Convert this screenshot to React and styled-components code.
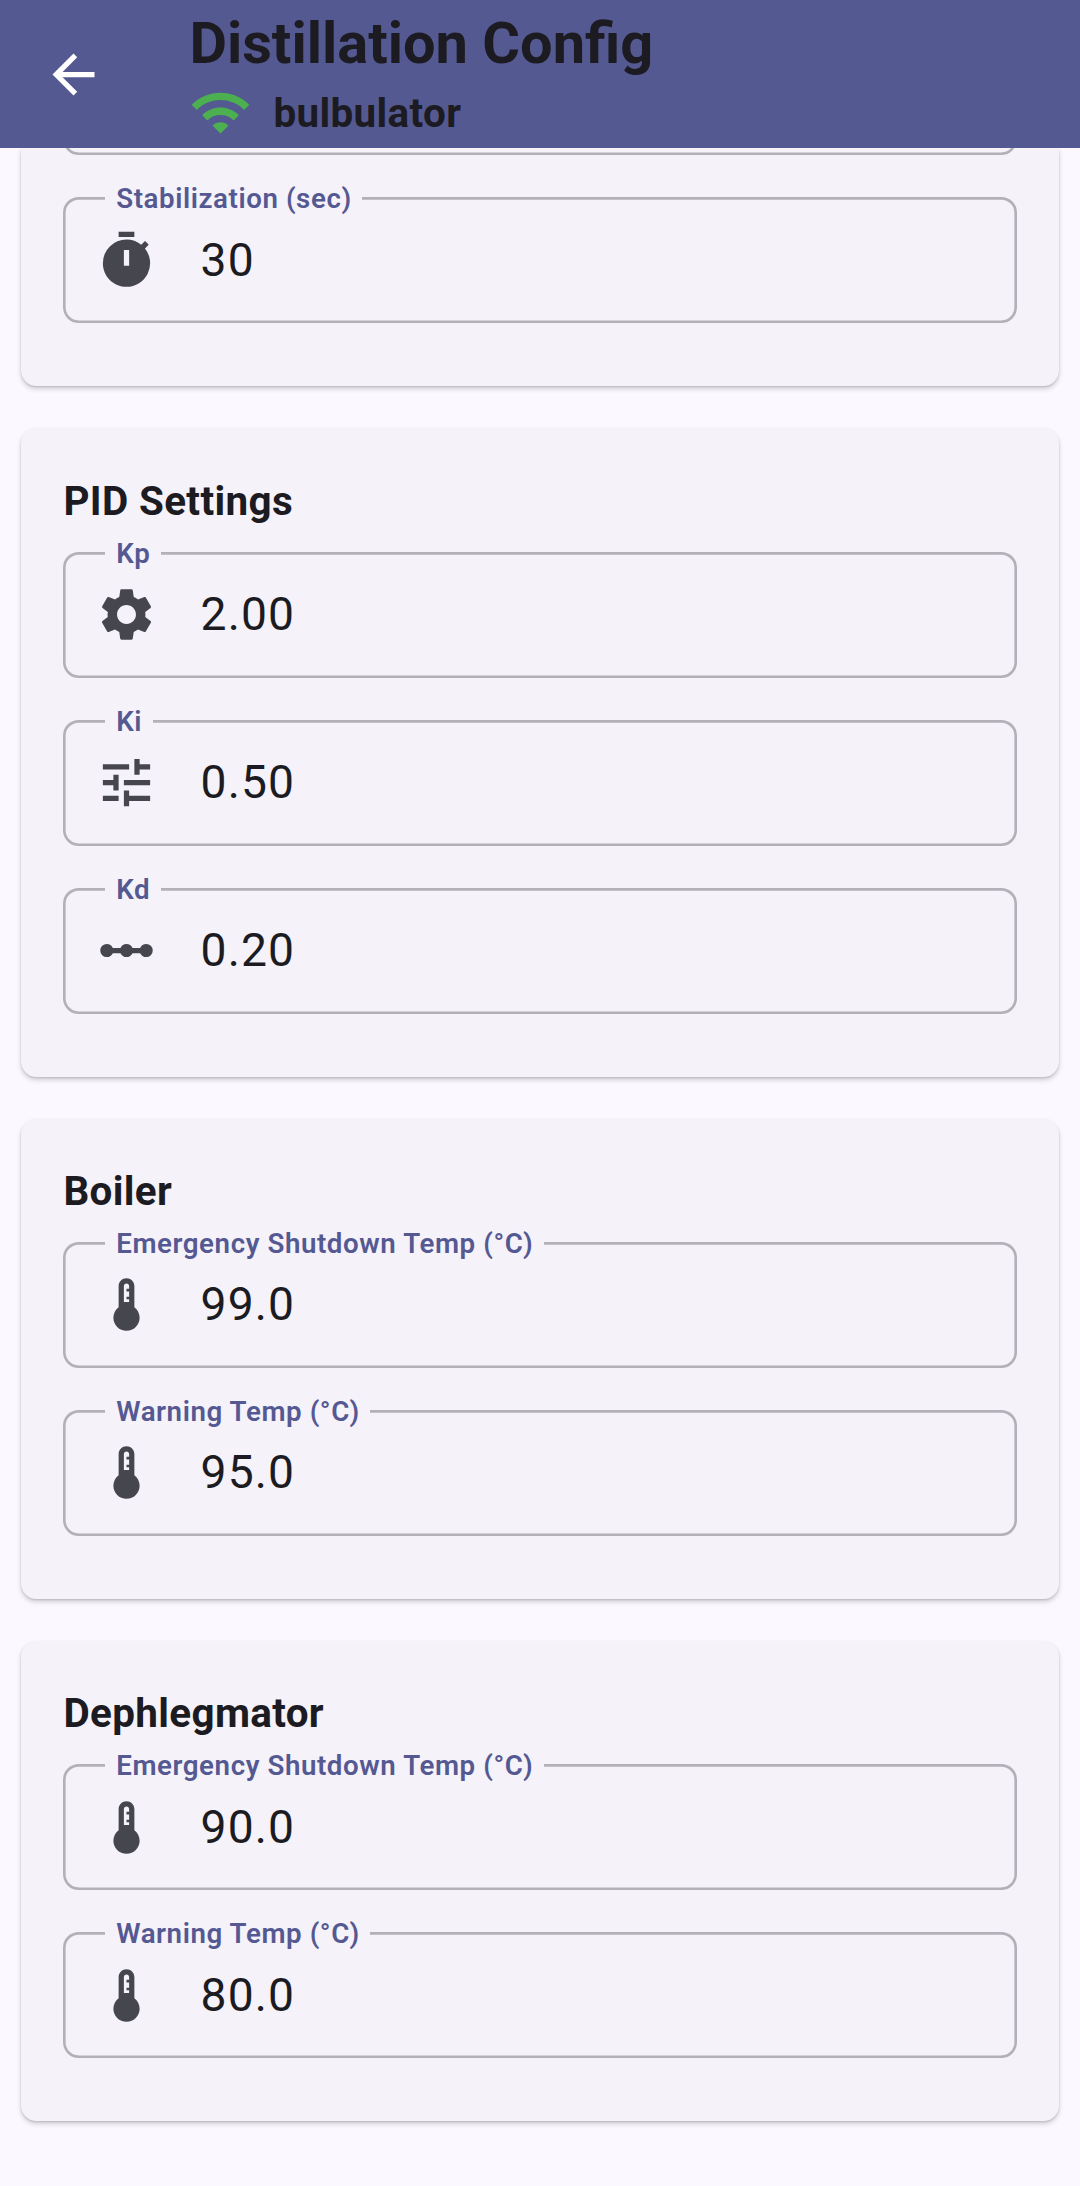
import React from "react";
import styled, { createGlobalStyle } from "styled-components";
import {
  MdArrowBack,
  MdWifi,
  MdTimer,
  MdSettings,
  MdTune,
  MdLinearScale,
  MdThermostat,
} from "react-icons/md";

const GlobalStyle = createGlobalStyle`
  *, *::before, *::after { box-sizing: border-box; }
  body {
    margin: 0;
    background: #fbf8ff;
    color: #1b1b21;
    font-family: Roboto, "Noto Sans", sans-serif;
  }
`;

const Screen = styled.div`
  display: flex;
  flex-direction: column;
  width: 1080px;
  height: 2186px;
  overflow: hidden;
`;

const AppBar = styled.header`
  display: flex;
  align-items: center;
  flex: none;
  height: 148px;
  padding-left: 42.4px;
  background: #555992;
`;

const BackButton = styled.button`
  display: flex;
  margin: 1px 84px 0 0;
  padding: 0;
  border: 0;
  background: none;
  color: #fff;
  font-size: 63px;
`;

const Heading = styled.div`
  display: flex;
  flex-direction: column;
`;

const Title = styled.h1`
  margin: 0;
  padding-top: 1.3px;
  font-size: 57.75px;
  line-height: 74px;
  font-weight: 700;
`;

const Device = styled.div`
  display: flex;
  align-items: center;
  gap: 21px;
  height: 63px;
  margin-top: 1.2px;
  font-size: 40.425px;
  font-weight: 700;
  letter-spacing: 0.35px;

  svg {
    font-size: 63px;
    color: #4caf50;
  }
`;

const DeviceName = styled.span`
  padding-top: 2px;
`;

const Content = styled.main`
  display: flex;
  flex-direction: column;
  flex: 1;
  min-height: 0;
  gap: 42px;
  padding: 0 21px;
  overflow: hidden;
`;

const Card = styled.section`
  flex: none;
  padding: ${(p) => (p.$scrolled ? 0 : 41.4)}px 42px 63px;
  border-radius: ${(p) => (p.$scrolled ? "0 0 15.75px 15.75px" : "15.75px")};
  background: #f5f2fa;
  box-shadow: 0 3px 5px rgba(0, 0, 0, 0.17), 0 1px 2px rgba(0, 0, 0, 0.12);
`;

const CardTitle = styled.h2`
  margin: 0 0 18.9px;
  padding-left: 0.4px;
  font-size: 40.425px;
  line-height: 63px;
  font-weight: 700;
  letter-spacing: 0.35px;
`;

const Fields = styled.div`
  display: flex;
  flex-direction: column;
  gap: 42px;
`;

const Field = styled.div`
  position: relative;
  display: flex;
  align-items: center;
  gap: 43px;
  height: 126px;
  padding-left: 31.6px;
  border-radius: 15.75px;
  box-shadow: inset 0 0 0 2.625px #b3b1b8;

  svg {
    flex: none;
    font-size: 63px;
    color: #46464f;
  }
`;

const ScrolledField = styled(Field)`
  margin-top: -118.6px;
`;

const Label = styled.label`
  position: absolute;
  left: 42px;
  top: -16px;
  padding: 0 10.5px 0 11.2px;
  background: #f5f2fa;
  color: #555992;
  font-size: 27.7px;
  line-height: 36px;
  font-weight: 560;
  letter-spacing: 0.58px;
  white-space: nowrap;
`;

const Value = styled.span`
  font-size: 46.2px;
  line-height: 63px;
  letter-spacing: 1.1px;
`;

const sections = [
  {
    scrolled: true,
    fields: [{ label: "Stabilization (sec)", icon: MdTimer, value: "30" }],
  },
  {
    title: "PID Settings",
    fields: [
      { label: "Kp", icon: MdSettings, value: "2.00" },
      { label: "Ki", icon: MdTune, value: "0.50" },
      { label: "Kd", icon: MdLinearScale, value: "0.20" },
    ],
  },
  {
    title: "Boiler",
    fields: [
      { label: "Emergency Shutdown Temp (°C)", icon: MdThermostat, value: "99.0" },
      { label: "Warning Temp (°C)", icon: MdThermostat, value: "95.0" },
    ],
  },
  {
    title: "Dephlegmator",
    fields: [
      { label: "Emergency Shutdown Temp (°C)", icon: MdThermostat, value: "90.0" },
      { label: "Warning Temp (°C)", icon: MdThermostat, value: "80.0" },
    ],
  },
];

function ConfigField({ label, icon: Icon, value }) {
  return (
    <Field>
      <Label>{label}</Label>
      <Icon />
      <Value>{value}</Value>
    </Field>
  );
}

export default function App() {
  return (
    <Screen>
      <GlobalStyle />
      <AppBar>
        <BackButton aria-label="Back">
          <MdArrowBack />
        </BackButton>
        <Heading>
          <Title>Distillation Config</Title>
          <Device>
            <MdWifi />
            <DeviceName>bulbulator</DeviceName>
          </Device>
        </Heading>
      </AppBar>
      <Content>
        {sections.map((section, i) => (
          <Card key={i} $scrolled={section.scrolled}>
            {section.title && <CardTitle>{section.title}</CardTitle>}
            <Fields>
              {section.scrolled && <ScrolledField />}
              {section.fields.map((field) => (
                <ConfigField key={field.label} {...field} />
              ))}
            </Fields>
          </Card>
        ))}
      </Content>
    </Screen>
  );
}
